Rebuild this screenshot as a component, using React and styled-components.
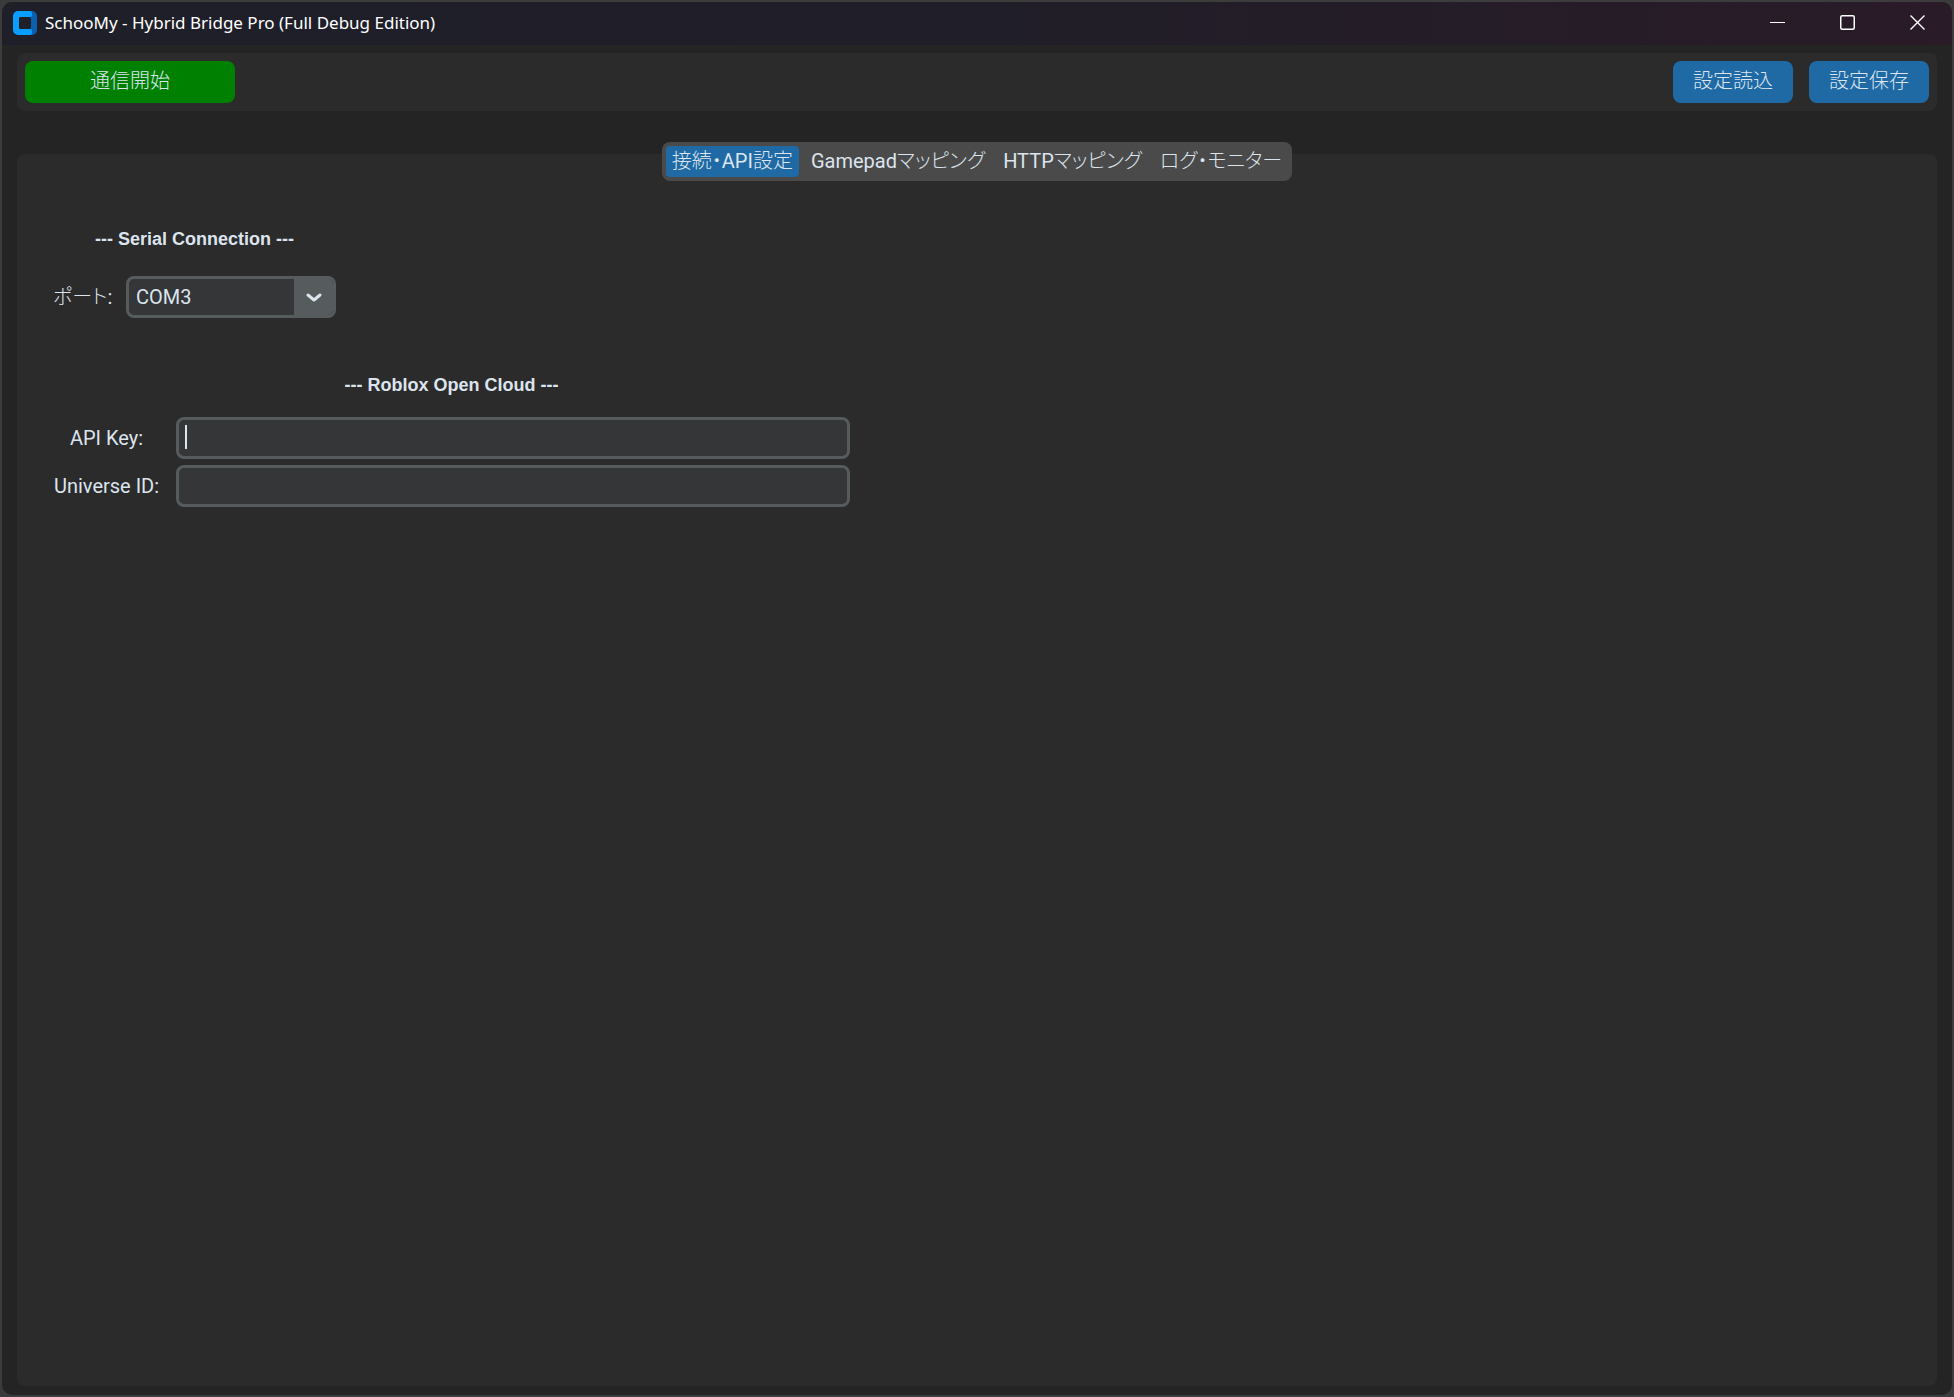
import React, { useState } from 'react';
import styled, { createGlobalStyle } from 'styled-components';

const GlobalStyle = createGlobalStyle`
	* {
		box-sizing: border-box;
	}
	body {
		margin: 0;
		background: #3a3a3a;
	}
	button,
	input,
	select {
		font: inherit;
		color: inherit;
		border: none;
		margin: 0;
		outline: none;
	}
	button {
		cursor: pointer;
	}
`;

const Window = styled.div`
	display: flex;
	flex-direction: column;
	min-height: 100vh;
	border: 2px solid #3c3c3c;
	border-radius: 12px;
	overflow: hidden;
	background: #242424;
	color: #dce4ee;
	font-family: Roboto, 'Noto Sans CJK JP Light', 'Noto Sans CJK JP', sans-serif;
	font-size: 20px;
	line-height: 24px;
`;

const TitleBar = styled.header`
	display: flex;
	align-items: center;
	height: 43px;
	padding: 0 0 2px 11px;
	background: linear-gradient(90deg, #1e1f29, #201e28 50%, #291b27);
	color: #fff;
`;

const Title = styled.h1`
	flex: 1;
	margin: 0 0 0 8px;
	font-family: 'Noto Sans', sans-serif;
	font-size: 17px;
	font-weight: 400;
`;

const CaptionButton = styled.button`
	display: grid;
	place-items: center;
	width: 70px;
	height: 41px;
	padding: 0;
	background: transparent;
`;

const Body = styled.main`
	flex: 1;
	display: flex;
	flex-direction: column;
	padding: 8px 15px 9px;
`;

const Toolbar = styled.div`
	display: flex;
	gap: 16px;
	padding: 8px;
	border-radius: 8px;
	background: #2b2b2b;
`;

const Spacer = styled.div`
	flex: 1;
`;

const Button = styled.button`
	width: ${({ $wide }) => ($wide ? '210px' : '120px')};
	height: 42px;
	padding: 0 0 2px;
	border-radius: 8px;
	background: ${({ $color }) => $color || '#1f6aa5'};
	font-weight: 300;
`;

const TabBar = styled.div`
	z-index: 1;
	display: flex;
	align-self: center;
	gap: 6px;
	margin: 31px 0 -27px;
	padding: 4px;
	border-radius: 8px;
	background: #4a4a4a;
`;

const Tab = styled.button`
	height: 31px;
	padding: 0 6px 2px;
	border-radius: 4px;
	background: ${({ $active }) => ($active ? '#1f6aa5' : 'transparent')};
	font-feature-settings: 'palt';
	white-space: nowrap;
`;

const Panel = styled.section`
	flex: 1;
	display: flex;
	flex-direction: column;
	align-items: flex-start;
	gap: 54px;
	padding: 72px 36px 36px;
	border-radius: 8px;
	background: #2b2b2b;
`;

const Group = styled.section`
	display: flex;
	flex-direction: column;
	gap: ${({ $gap }) => $gap};
`;

const Heading = styled.h2`
	margin: 0;
	font-family: 'Liberation Sans', sans-serif;
	font-size: 18px;
	line-height: 26px;
	text-align: center;
`;

const Fields = styled.div`
	display: grid;
	grid-template-columns: ${({ $label }) => $label} auto;
	align-items: center;
	gap: 6px 16px;
`;

const Label = styled.label`
	text-align: center;
	font-feature-settings: 'palt';
	white-space: nowrap;
`;

const Field = styled.div`
	position: relative;
	width: ${({ $width }) => $width};
	height: 42px;
	border: 3px solid #565b5e;
	border-radius: 8px;
	overflow: hidden;
	background: #343638;
`;

const Input = styled.input`
	width: 100%;
	height: 100%;
	padding: 0 7px;
	background: transparent;
	caret-color: transparent;
`;

const Caret = styled.span`
	position: absolute;
	top: 5px;
	left: 6px;
	width: 2px;
	height: 24px;
	background: #dce4ee;
	pointer-events: none;
`;

const Select = styled.select`
	width: 100%;
	height: 100%;
	padding: 0 7px;
	appearance: none;
	background: transparent;
`;

const Arrow = styled.span`
	position: absolute;
	top: 0;
	right: 0;
	display: grid;
	place-items: center;
	width: 39px;
	height: 100%;
	padding: 2px 0 0;
	background: #565b5e;
	pointer-events: none;
`;

const tabs = ['接続・API設定', 'Gamepadマッピング', 'HTTPマッピング', 'ログ・モニター'];

function AppIcon() {
	return (
		<svg width="24" height="24" viewBox="0 0 24 24" aria-hidden="true">
			<path fill="#0a5fae" d="M17 0h2a5 5 0 0 1 5 5v14a5 5 0 0 1-5 5h-2z" />
			<path
				fill="#0a9cff"
				d="M5 0h12q2 0 2 2v2q0 2-2 2H8Q6 6 6 8v8q0 2 2 2h9q2 0 2 2v2q0 2-2 2H5a5 5 0 0 1-5-5V5a5 5 0 0 1 5-5z"
			/>
			<rect x="6" y="6" width="12" height="12" rx="2" fill="#1e1f29" />
		</svg>
	);
}

export default function App() {
	const [active, setActive] = useState(0);
	const [focused, setFocused] = useState(true);

	return (
		<>
			<GlobalStyle />
			<Window lang="ja">
				<TitleBar>
					<AppIcon />
					<Title>SchooMy - Hybrid Bridge Pro (Full Debug Edition)</Title>
					<CaptionButton aria-label="Minimize">
						<svg width="15" height="15">
							<path d="M0 7.5h15" stroke="#fff" />
						</svg>
					</CaptionButton>
					<CaptionButton aria-label="Maximize">
						<svg width="15" height="15">
							<rect x=".75" y=".75" width="13.5" height="13.5" rx="1.5" fill="none" stroke="#fff" strokeWidth="1.5" />
						</svg>
					</CaptionButton>
					<CaptionButton aria-label="Close">
						<svg width="15" height="15">
							<path d="M.5 .5l14 14M14.5 .5l-14 14" stroke="#fff" strokeWidth="1.4" />
						</svg>
					</CaptionButton>
				</TitleBar>
				<Body>
					<Toolbar>
						<Button $wide $color="#008000">
							通信開始
						</Button>
						<Spacer />
						<Button>設定読込</Button>
						<Button>設定保存</Button>
					</Toolbar>
					<TabBar role="tablist">
						{tabs.map((name, i) => (
							<Tab key={name} role="tab" aria-selected={i === active} $active={i === active} onClick={() => setActive(i)}>
								{name}
							</Tab>
						))}
					</TabBar>
					<Panel>
						<Group $gap="24px">
							<Heading>--- Serial Connection ---</Heading>
							<Fields $label="57px">
								<Label htmlFor="port">ポート:</Label>
								<Field $width="210px">
									<Select id="port" defaultValue="COM3">
										<option>COM3</option>
									</Select>
									<Arrow>
										<svg width="16" height="10" fill="none" stroke="#dce4ee" strokeWidth="3">
											<path d="M2 2l6 5 6-5" strokeLinecap="round" strokeLinejoin="round" />
										</svg>
									</Arrow>
								</Field>
							</Fields>
						</Group>
						<Group $gap="19px">
							<Heading>--- Roblox Open Cloud ---</Heading>
							<Fields $label="107px">
								<Label htmlFor="apiKey">API Key:</Label>
								<Field $width="674px">
									<Input id="apiKey" autoFocus onFocus={() => setFocused(true)} onBlur={() => setFocused(false)} />
									{focused && <Caret />}
								</Field>
								<Label htmlFor="universeId">Universe ID:</Label>
								<Field $width="674px">
									<Input id="universeId" />
								</Field>
							</Fields>
						</Group>
					</Panel>
				</Body>
			</Window>
		</>
	);
}
